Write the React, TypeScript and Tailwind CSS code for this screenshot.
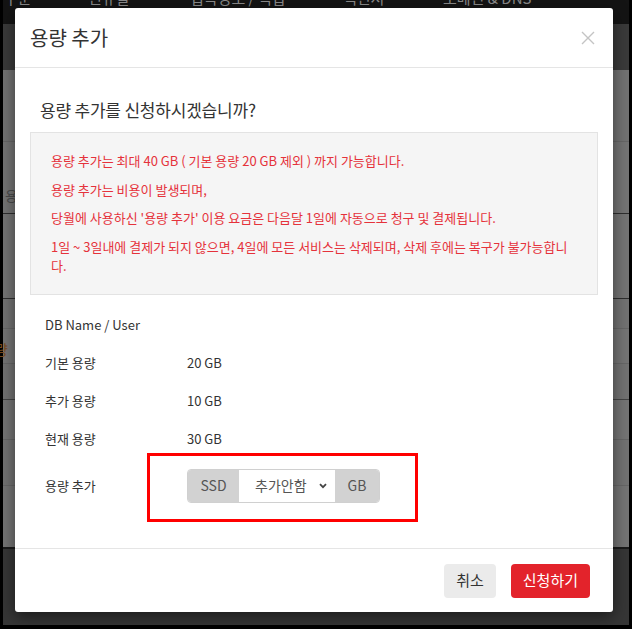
import React from "react";

const FONT = { fontFamily: '"Noto Sans CJK KR", "Noto Sans", sans-serif' };

function BgRow({ h, c, line }: { h: number; c: string; line?: string }) {
  return (
    <div
      style={{ height: h, backgroundColor: c, borderBottom: line ? `1px solid ${line}` : undefined }}
    />
  );
}

export default function App() {
  return (
    <div className="relative w-[632px] h-[629px] bg-black overflow-hidden" style={FONT}>
      {/* dimmed page behind the modal */}
      <div className="absolute left-[3px] top-0 w-[626px] h-[625px] flex flex-col bg-[#333]">
        <div className="h-[24px] bg-[#141414] relative overflow-hidden text-[15px] text-[#8a8a8a]">
          <div className="absolute top-[-13px] left-0 flex">
            <span className="w-[85px] pl-[1px]">구분</span>
            <span className="w-[102px]">신규일</span>
            <span className="w-[153px]">접속정보 / 백업</span>
            <span className="w-[100px]">백신서</span>
            <span>도메인 &amp; DNS</span>
          </div>
        </div>
        <BgRow h={46} c="#3a3a3a" />
        <BgRow h={72} c="#727272" line="#666" />
        <BgRow h={72} c="#747474" line="#2e2e2e" />
        <BgRow h={85} c="#747474" line="#2e2e2e" />
        <BgRow h={30} c="#727272" line="#666" />
        <BgRow h={35} c="#747474" line="#666" />
        <BgRow h={36} c="#727272" line="#444" />
        <BgRow h={40} c="#747474" line="#666" />
        <BgRow h={46} c="#727272" line="#666" />
        <BgRow h={61} c="#747474" />
        <div className="h-[2px] bg-[#1a1a1a]" />
        <div className="flex-1 bg-[#363636]" />
      </div>
      <span className="absolute left-[5px] top-[186px] text-[14px] text-[#4a4a4a] leading-[18px]">용량</span>
      <span className="absolute left-[-18px] top-[340px] text-[14px] text-[#7a4a1c] leading-[18px]">용량</span>

      {/* modal */}
      <div className="absolute left-[15px] top-[8px] w-[598px] bg-white rounded-[3px] shadow-[0_5px_15px_rgba(0,0,0,0.5)] flex flex-col">
        {/* header */}
        <div className="h-[60px] pl-[15px] pr-[18px] flex items-center justify-between border-b border-[#e5e5e5]">
          <span className="text-[20px] text-[#333] leading-none mt-[1px]">용량 추가</span>
          <svg width="14" height="14" viewBox="0 0 14 14" className="mt-[1px]">
            <path d="M1 1 L13 13 M13 1 L1 13" stroke="#c4c4c4" strokeWidth="1.4" fill="none" />
          </svg>
        </div>

        {/* body */}
        <div className="px-[15px] pt-[30px] pb-[45px]">
          <div className="pl-[10px] text-[17px] leading-[24px] text-[#333] tracking-[-0.2px]">
            용량 추가를 신청하시겠습니까?
          </div>
          <div className="mt-[10px] border border-[#e3e3e3] bg-[#f5f5f5] pt-[18px] pb-[19px] pl-[20px] pr-[20px] flex flex-col gap-[9.5px] text-[13px] leading-[19px] text-[#e5323b]">
            <p>용량 추가는 최대 40 GB ( 기본 용량 20 GB 제외 ) 까지 가능합니다.</p>
            <p>용량 추가는 비용이 발생되며,</p>
            <p>당월에 사용하신 '용량 추가' 이용 요금은 다음달 1일에 자동으로 청구 및 결제됩니다.</p>
            <p>1일 ~ 3일내에 결제가 되지 않으면, 4일에 모든 서비스는 삭제되며, 삭제 후에는 복구가 불가능합니다.</p>
          </div>

          <div className="mt-[11px] pl-[15px] text-[13px] text-[#333]">
            <div className="h-[38px] flex items-center">DB Name / User</div>
            <div className="h-[38px] flex items-center">
              <span className="w-[142px]">기본 용량</span>
              <span>20 GB</span>
            </div>
            <div className="h-[38px] flex items-center">
              <span className="w-[142px]">추가 용량</span>
              <span>10 GB</span>
            </div>
            <div className="h-[38px] flex items-center">
              <span className="w-[142px]">현재 용량</span>
              <span>30 GB</span>
            </div>
            <div className="mt-[11px] h-[34px] flex items-center">
              <span className="w-[142px]">용량 추가</span>
              <div className="flex h-[34px] w-[193px] rounded-[4px] overflow-hidden border border-[#d0d0d0] text-[14px] text-[#555]">
                <div className="w-[51px] bg-[#d2d2d2] flex items-center justify-center">SSD</div>
                <div className="w-[96px] bg-white flex items-center pl-[16px] pr-[8px] justify-between">
                  <span>추가안함</span>
                  <svg width="8" height="6" viewBox="0 0 8 6">
                    <path d="M1 1.2 L4 4.2 L7 1.2" stroke="#444" strokeWidth="1.8" fill="none" />
                  </svg>
                </div>
                <div className="flex-1 bg-[#d2d2d2] flex items-center justify-center">GB</div>
              </div>
            </div>
          </div>
        </div>

        {/* footer */}
        <div className="border-t border-[#e5e5e5] pt-[15px] pb-[14px] pr-[23px] flex justify-end gap-[15px] text-[15px]">
          <button className="h-[34px] px-[12px] rounded-[4px] bg-[#ebebeb] text-[#333]">취소</button>
          <button className="h-[34px] px-[12px] rounded-[4px] bg-[#e3232b] text-white">신청하기</button>
        </div>
      </div>

      {/* red annotation box */}
      <div className="absolute left-[147px] top-[453px] w-[271px] h-[69px] border-[3px] border-[#ff0000]" />
    </div>
  );
}
